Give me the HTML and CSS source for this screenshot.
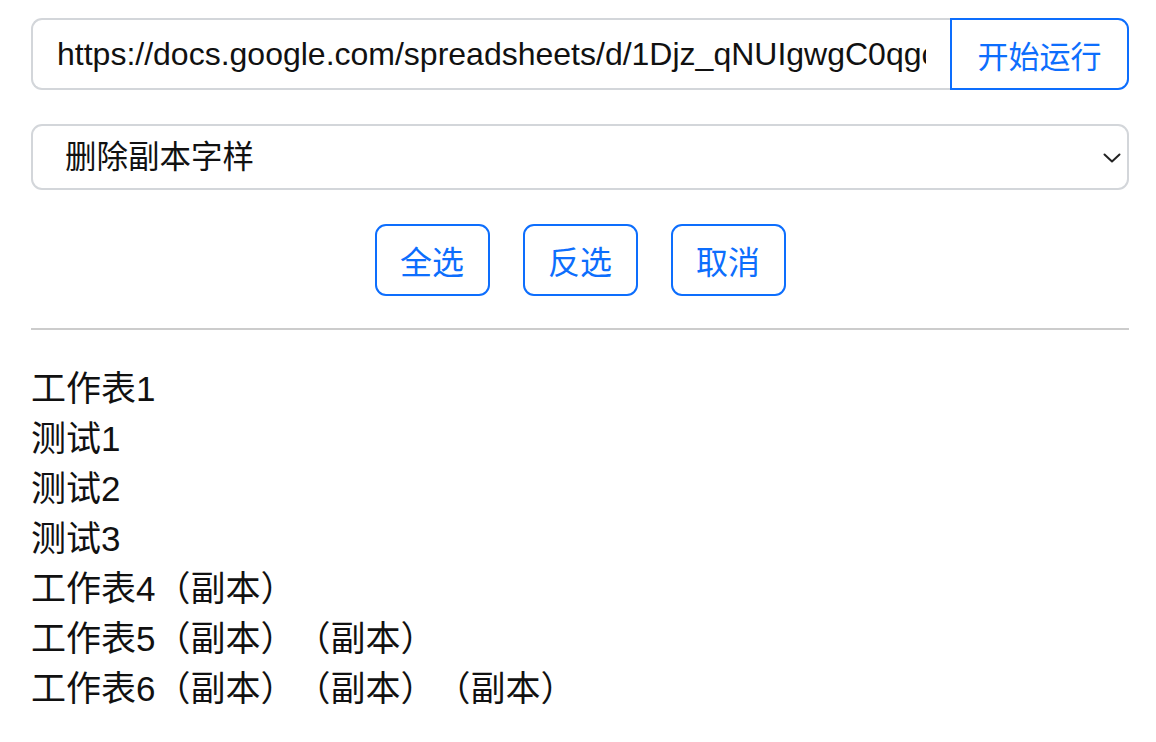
FILE: index.html
```html
<!DOCTYPE html>
<html lang="zh-CN">
<head>
<meta charset="utf-8">
<title>删除副本字样</title>
<link rel="stylesheet" href="styles.css">
</head>
<body>
<div class="page">
  <div class="input-group">
    <input class="url-input" type="text" value="https://docs.google.com/spreadsheets/d/1Djz_qNUIgwgC0qgcXyZ12345abcdefg/edit">
    <button class="btn btn-run">开始运行</button>
  </div>
  <div class="select-wrap">
    <select class="mode-select">
      <option>删除副本字样</option>
    </select>
    <svg class="chevron" width="18" height="10" viewBox="0 0 18 10"><path d="M1.5 1.5 L9 8.5 L16.5 1.5" fill="none" stroke="#222" stroke-width="2" stroke-linecap="round" stroke-linejoin="round"/></svg>
  </div>
  <div class="actions">
    <button class="btn btn-small">全选</button>
    <button class="btn btn-small">反选</button>
    <button class="btn btn-small">取消</button>
  </div>
  <hr class="divider">
  <ul class="sheet-list">
    <li>工作表1</li>
    <li>测试1</li>
    <li>测试2</li>
    <li>测试3</li>
    <li>工作表4（副本）</li>
    <li>工作表5（副本）（副本）</li>
    <li>工作表6（副本）（副本）（副本）</li>
  </ul>
</div>
</body>
</html>
```

FILE: styles.css
```css
html, body {
  margin: 0;
  padding: 0;
  background: #ffffff;
}

body {
  font-family: "Liberation Sans", "Noto Sans CJK SC", sans-serif;
  color: #111111;
  text-spacing-trim: space-all;
}

.page {
  padding: 18px 27px 0 31px;
  display: flex;
  flex-direction: column;
}

.input-group {
  display: flex;
  height: 72px;
}

.url-input {
  flex: 1;
  min-width: 0;
  box-sizing: border-box;
  height: 72px;
  border: 2px solid #d3d6da;
  border-right: none;
  border-radius: 11px 0 0 11px;
  padding: 0 24px;
  font-family: "Liberation Sans", "Noto Sans CJK SC", sans-serif;
  font-size: 32px;
  color: #111111;
  outline: none;
  background: #fff;
}

.btn {
  box-sizing: border-box;
  background: #ffffff;
  border: 2px solid #0d6efd;
  color: #0d6efd;
  font-family: "Liberation Sans", "Noto Sans CJK SC", sans-serif;
  font-size: 31px;
  cursor: pointer;
  padding: 0;
}

.btn-run {
  width: 179px;
  height: 72px;
  border-radius: 0 11px 11px 0;
}

.select-wrap {
  position: relative;
  margin-top: 34px;
}

.mode-select {
  appearance: none;
  -webkit-appearance: none;
  width: 100%;
  box-sizing: border-box;
  height: 66px;
  border: 2px solid #d3d6da;
  border-radius: 11px;
  padding: 0 32px;
  font-family: "Liberation Sans", "Noto Sans CJK SC", sans-serif;
  font-size: 31.5px;
  color: #111111;
  background: #ffffff;
  outline: none;
}

.chevron {
  position: absolute;
  right: 8px;
  top: 29px;
  pointer-events: none;
}

.actions {
  display: flex;
  justify-content: center;
  gap: 33px;
  margin-top: 34px;
}

.btn-small {
  width: 115px;
  height: 72px;
  border-radius: 11px;
  font-size: 32px;
}

.divider {
  border: none;
  border-top: 2px solid #cccccc;
  margin: 32px 0 0 0;
  height: 0;
}

.sheet-list {
  list-style: none;
  margin: 34px 0 0 0;
  padding: 0;
  font-size: 35px;
  line-height: 50px;
  color: #111111;
  text-spacing-trim: space-all;
}
```
